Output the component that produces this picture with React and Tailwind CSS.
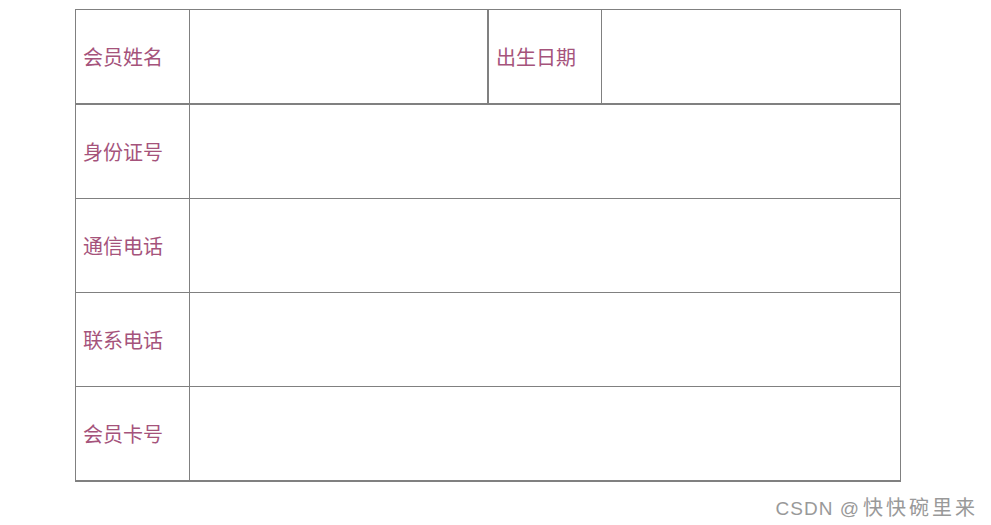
import React from 'react';

const cell = 'flex items-center pl-[7px] border-r border-b border-[#808080] text-[20px] text-[#a5537b]';

const rows = ['身份证号', '通信电话', '联系电话', '会员卡号'];

export default function App() {
  return (
    <div className="w-[991px] h-[525px] bg-white" style={{ fontFamily: '"Microsoft YaHei", "Noto Sans CJK SC", sans-serif' }}>
      <div className="pt-[9px] pl-[75px]">
        <div className="w-[826px] border-l border-t border-[#808080]">
          <div className="grid grid-cols-[114px_299px_113px_299px]">
            <div className={`${cell} h-[95px] border-b-2`}>会员姓名</div>
            <div className={`${cell} h-[95px] border-b-2 border-r-2`}></div>
            <div className={`${cell} h-[95px] border-b-2`}>出生日期</div>
            <div className={`${cell} h-[95px] border-b-2`}></div>
          </div>
          {rows.map((label, i) => (
            <div key={label} className="grid grid-cols-[114px_711px]">
              <div className={`${cell} ${i === rows.length - 1 ? 'h-[95px] border-b-2' : 'h-[94px]'}`}>{label}</div>
              <div className={`${cell} ${i === rows.length - 1 ? 'h-[95px] border-b-2' : 'h-[94px]'}`}></div>
            </div>
          ))}
        </div>
      </div>
      <div className="flex justify-end items-baseline pr-[16px] mt-[13px] text-[#999999] leading-[24px]">
        <span className="text-[19px] tracking-[1px] mr-[3px]" style={{ fontFamily: '"Liberation Sans", sans-serif' }}>CSDN @</span>
        <span className="text-[20px] tracking-[3px] -mr-[3px]">快快碗里来</span>
      </div>
    </div>
  );
}
